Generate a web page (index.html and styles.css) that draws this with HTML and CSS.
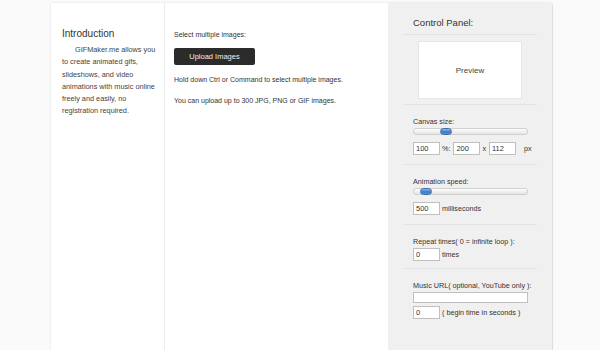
FILE: index.html
```html
<html lang="en">
<head>
  <meta charset="UTF-8" />
  <title>GIFMaker.me</title>
  <link rel="stylesheet" href="styles.css">
</head>
<body>
  <div class="page">
    <div class="intro">
      <h2>Introduction</h2>
      <p>GIFMaker.me allows you to create animated gifs, slideshows, and video animations with music online freely and easily, no registration required.</p>
    </div>
    <div class="main">
      <p class="select">Select multiple images:</p>
      <button class="upload">Upload Images</button>
      <p class="hint">Hold down Ctrl or Command to select multiple images.</p>
      <p class="hint">You can upload up to 300 JPG, PNG or GIF images.</p>
    </div>
    <div class="panel">
      <h3>Control Panel:</h3>
      <div class="preview-wrap">
        <div class="preview">Preview</div>
      </div>
      <div class="group">
        <div class="label">Canvas size:</div>
        <div class="slider"><span class="knob" style="left: 23%"></span></div>
        <div class="row">
          <input class="num" type="text" value="100"><span>%:</span>
          <input class="num" type="text" value="200"><span>x</span>
          <input class="num" type="text" value="112"><span class="unit">px</span>
        </div>
      </div>
      <div class="group">
        <div class="label">Animation speed:</div>
        <div class="slider"><span class="knob" style="left: 5%"></span></div>
        <div class="row">
          <input class="num" type="text" value="500"><span>milliseconds</span>
        </div>
      </div>
      <div class="group repeat">
        <div class="label">Repeat times( 0 = infinite loop ):</div>
        <div class="row">
          <input class="num" type="text" value="0"><span>times</span>
        </div>
      </div>
      <div class="group last">
        <div class="label">Music URL( optional, YouTube only ):</div>
        <input class="url" type="text" value="">
        <div class="row">
          <input class="num" type="text" value="0"><span>( begin time in seconds )</span>
        </div>
      </div>
    </div>
  </div>
</body>
</html>
```

FILE: styles.css
```css
body {
  margin: 0;
  background: #fafafa;
  font-family: "Liberation Sans", Arial, sans-serif;
  color: #333;
}
.page {
  display: flex;
  margin: 3px 0 0 51px;
  width: 501px;
  height: 360px;
  background: white;
  box-shadow: 0 0 2px rgba(0, 0, 0, 0.12);
}
.intro {
  width: 94px;
  padding: 25px 8px 0 11px;
  border-right: 1px solid #ececec;
}
.intro h2 {
  font-size: 10px;
  font-weight: normal;
  margin: 0 0 5px;
}
.intro p {
  font-size: 7.3px;
  line-height: 12.3px;
  text-indent: 13px;
  margin: 0;
  color: #444;
}
.main {
  width: 214px;
  padding: 28px 0 0 9px;
}
.main p {
  font-size: 7px;
  margin: 0;
  color: #333;
}
.upload {
  display: block;
  margin: 10px 0 11px;
  width: 81px;
  height: 17px;
  background: #2b2b2b;
  color: #eee;
  border: none;
  border-radius: 2px;
  font-family: inherit;
  font-size: 7.5px;
  padding: 0;
}
.main .hint {
  margin-bottom: 14px;
}
.panel {
  width: 134px;
  padding: 14px 15px 0 15px;
  background: #f0f0f0;
  border-radius: 0 4px 0 0;
  box-shadow: 1px 0 1px rgba(0, 0, 0, 0.08);
}
.panel h3 {
  font-size: 9.5px;
  font-weight: normal;
  margin: 0;
  padding: 0 0 6px 10px;
  border-bottom: 1px solid #e2e2e2;
}
.preview-wrap {
  padding: 6px 0 5px;
  border-bottom: 1px solid #e2e2e2;
}
.preview {
  margin-left: 15px;
  width: 102px;
  height: 56px;
  background: white;
  border: 1px solid #e6e6e6;
  display: flex;
  align-items: center;
  justify-content: center;
  font-size: 8px;
  color: #444;
}
.group {
  padding: 12px 0 9px 10px;
  border-bottom: 1px solid #e2e2e2;
  font-size: 7.2px;
}
.group.repeat {
  padding-bottom: 7px;
}
.group.last {
  border-bottom: none;
}
.label {
  line-height: 9px;
  margin-bottom: 2px;
}
.slider {
  position: relative;
  width: 113px;
  height: 5px;
  margin: 1px 0 7px;
  border: 1px solid #d0d0d0;
  border-radius: 3px;
  background: linear-gradient(#fdfdfd, #e4e4e4);
}
.knob {
  position: absolute;
  top: -1px;
  width: 10px;
  height: 5px;
  border-radius: 4px;
  border: 1px solid #3a6ea8;
  background: linear-gradient(#8fb8e8, #3b78c4 60%, #5a93d6);
}
.row {
  display: flex;
  align-items: center;
  gap: 2px;
}
.row span {
  margin-right: 1px;
  white-space: nowrap;
}
.row .unit {
  margin-left: 6px;
}
input {
  box-sizing: border-box;
  font-family: inherit;
  font-size: 7.5px;
  color: #333;
  border: 1px solid #bfbfbf;
  background: white;
  padding: 0 2px;
  margin: 0;
  outline: none;
}
.num {
  flex-shrink: 0;
  width: 27px;
  height: 13px;
}
.url {
  display: block;
  width: 115px;
  height: 11px;
  margin-bottom: 3px;
}
```
